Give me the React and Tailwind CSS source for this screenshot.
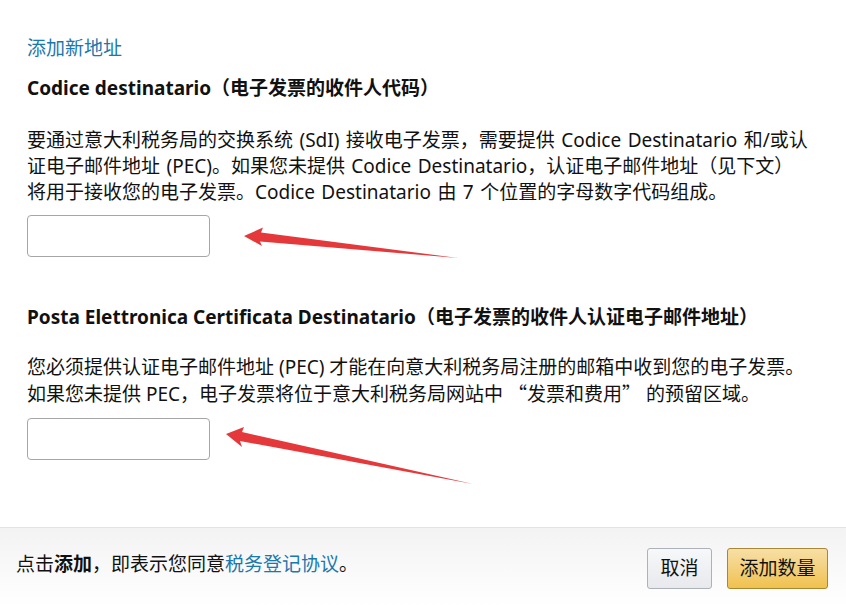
const FONT = 'font-["Noto_Sans","Noto_Sans_CJK_SC",sans-serif]';
const CJK = 'font-["Noto_Sans_CJK_SC",sans-serif]';

function Arrows() {
  return (
    <svg
      className="absolute inset-0 pointer-events-none"
      width="846"
      height="607"
      viewBox="0 0 846 607"
    >
      {/* top arrow */}
      <polygon
        points="244,236 263,227.5 261,232.5 458,258 260,241.5 262,246"
        fill="#e5383b"
      />
      {/* bottom arrow */}
      <polygon
        points="226,434 244,427 242,432 473,484 240,441 242,447"
        fill="#e5383b"
      />
    </svg>
  );
}

function Section({ title, children, paraClass, mtInput }) {
  return (
    <div>
      <h3 className="text-[19px] leading-[24px] font-bold text-[#111]">{title}</h3>
      <div className={`${paraClass} text-[19px] leading-[26px] text-[#111] whitespace-nowrap`}>
        {children}
      </div>
      <input
        type="text"
        className={`${mtInput} block w-[183px] h-[42px] rounded-[4px] border border-[#a6a6a6] bg-white outline-none`}
      />
    </div>
  );
}

export default function App() {
  return (
    <div className={`relative w-[846px] h-[607px] bg-white overflow-hidden ${FONT}`}>
      <div className="h-[527px] px-[27px] pt-[36px]">
        <a className="block text-[19px] leading-[24px] text-[#1b78ad] cursor-pointer">添加新地址</a>

        <div className="mt-[16px]">
          <Section
            title="Codice destinatario（电子发票的收件人代码）"
            paraClass="mt-[27px] [word-spacing:1.5px]"
            mtInput="mt-[10px]"
          >
            <p>要通过意大利税务局的交换系统 (SdI) 接收电子发票，需要提供 Codice Destinatario 和/或认</p>
            <p>证电子邮件地址 (PEC)。如果您未提供 Codice Destinatario，认证电子邮件地址（见下文）</p>
            <p>将用于接收您的电子发票。Codice Destinatario 由 7 个位置的字母数字代码组成。</p>
          </Section>
        </div>

        <div className="mt-[48px]">
          <Section
            title="Posta Elettronica Certificata Destinatario（电子发票的收件人认证电子邮件地址）"
            paraClass="mt-[25px]"
            mtInput="mt-[11px]"
          >
            <p>您必须提供认证电子邮件地址 (PEC) 才能在向意大利税务局注册的邮箱中收到您的电子发票。</p>
            <p>
              如果您未提供 PEC，电子发票将位于意大利税务局网站中 <span className={CJK}>“</span>发票和费用<span className={CJK}>”</span> 的预留区域。
            </p>
          </Section>
        </div>
      </div>

      {/* Footer */}
      <div className="h-[80px] border-t border-[#e3e3e3] bg-linear-to-b from-[#f3f3f3] to-[#ffffff] flex items-center justify-between pl-[16px] pr-[18px]">
        <p className="text-[19px] leading-[24px] text-[#111] mb-[8px]">
          点击<span className="font-bold">添加</span>，即表示您同意<a className="text-[#1b78ad] cursor-pointer">税务登记协议</a>。
        </p>
        <div className="flex items-center gap-[15px] mt-[2px]">
          <button className="h-[41px] w-[65px] rounded-[3px] border border-[#adb1b8] bg-linear-to-b from-[#f7f8fa] to-[#e7e9ec] text-[19px] text-[#111]">
            取消
          </button>
          <button className="h-[41px] w-[101px] rounded-[3px] border border-[#a88734] bg-linear-to-b from-[#f7dfa5] to-[#f0c14b] text-[19px] text-[#111]">
            添加数量
          </button>
        </div>
      </div>

      <Arrows />
    </div>
  );
}
